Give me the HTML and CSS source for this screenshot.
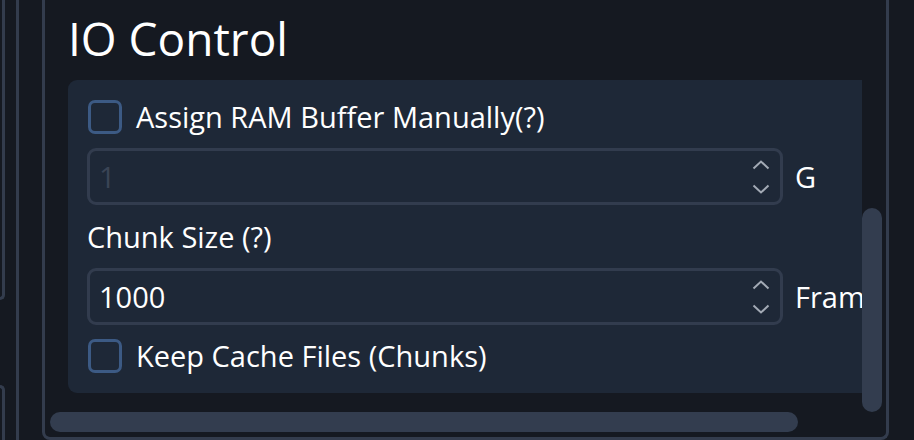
FILE: index.html
```html
<!DOCTYPE html>
<html>
<head>
<meta charset="utf-8">
<link rel="stylesheet" href="styles.css">
</head>
<body>
<div class="page">
  <div class="side">
    <div class="side-box side-top"></div>
    <div class="side-box side-bottom"></div>
  </div>
  <div class="outer">
    <div class="panel">
      <div class="scroll">
        <div class="viewport">
          <h1 class="title">IO Control</h1>
          <div class="card">
            <label class="check-row">
              <span class="checkbox"></span>
              <span class="check-text">Assign RAM Buffer Manually(?)</span>
            </label>
            <div class="field-row">
              <div class="spin disabled">
                <span class="spin-value">1</span>
                <span class="spin-arrows">
                  <svg width="18" height="36" viewBox="0 0 18 36"><path d="M1.5 9.5 L9 2.5 L16.5 9.5" fill="none" stroke="#a3aab5" stroke-width="2"/><path d="M1.5 26.5 L9 33.5 L16.5 26.5" fill="none" stroke="#a3aab5" stroke-width="2"/></svg>
                </span>
              </div>
              <span class="unit">G</span>
            </div>
            <div class="label">Chunk Size (?)</div>
            <div class="field-row">
              <div class="spin">
                <span class="spin-value">1000</span>
                <span class="spin-arrows">
                  <svg width="18" height="36" viewBox="0 0 18 36"><path d="M1.5 9.5 L9 2.5 L16.5 9.5" fill="none" stroke="#a3aab5" stroke-width="2"/><path d="M1.5 26.5 L9 33.5 L16.5 26.5" fill="none" stroke="#a3aab5" stroke-width="2"/></svg>
                </span>
              </div>
              <span class="unit">Frames</span>
            </div>
            <label class="check-row">
              <span class="checkbox"></span>
              <span class="check-text">Keep Cache Files (Chunks)</span>
            </label>
          </div>
        </div>
        <div class="vbar"><div class="vthumb"></div></div>
        <div class="hbar"><div class="hthumb"></div></div>
      </div>
    </div>
  </div>
</div>
</body>
</html>
```

FILE: styles.css
```css
* { box-sizing: border-box; }
html, body {
  margin: 0;
  padding: 0;
  background: #151921;
}
body {
  width: 914px;
  height: 440px;
  overflow: hidden;
  font-family: "Open Sans", "Noto Sans", sans-serif;
  color: #ffffff;
}
.page {
  display: flex;
  height: 440px;
}
.side {
  width: 5px;
  flex: none;
  display: flex;
  flex-direction: column;
}
.side-box {
  border-right: 3px solid #333c4d;
  border-bottom: 3px solid #333c4d;
  border-top: 3px solid #333c4d;
}
.side-top {
  height: 325px;
  border-top: none;
  border-bottom-right-radius: 7px;
}
.side-bottom {
  margin-top: 85px;
  height: 60px;
  border-bottom: none;
  border-top-right-radius: 7px;
}
.outer {
  margin-left: 11px;
  width: 902px;
  flex: none;
  border-left: 3px solid #333c4d;
  border-right: 3px solid #333c4d;
  padding-left: 23px;
}
.panel {
  width: 847px;
  height: 440px;
  border: 3px solid #333c4d;
  border-top: none;
  border-bottom-left-radius: 8px;
  border-bottom-right-radius: 8px;
  padding: 0 4px 5px 5px;
}
.scroll {
  display: grid;
  grid-template-columns: 812px 20px;
  grid-template-rows: 412px 20px;
  height: 432px;
}
.viewport {
  overflow: hidden;
  padding-left: 18px;
}
.title {
  margin: 0;
  font-weight: 400;
  font-size: 46px;
  line-height: 60px;
  height: 68px;
  padding-top: 8px;
  padding-left: 0;
  white-space: nowrap;
}
.card {
  margin-top: 12px;
  width: 940px;
  background: #1e2837;
  border-radius: 9px;
  padding: 20px 19px 20px 19px;
  display: flex;
  flex-direction: column;
  gap: 14px;
}
.check-row {
  display: flex;
  align-items: center;
  height: 34px;
  gap: 14px;
}
.checkbox {
  width: 34px;
  height: 34px;
  margin-left: 1px;
  border: 3px solid #3c5a84;
  border-radius: 7px;
  flex: none;
}
.check-text, .label, .unit, .spin-value {
  font-size: 29px;
  line-height: 34px;
  white-space: nowrap;
}
.label {
  height: 35px;
  padding-top: 1px;
}
.field-row {
  display: flex;
  align-items: center;
  gap: 12px;
}
.spin {
  width: 696px;
  height: 57px;
  border: 3px solid #323c4e;
  border-radius: 9px;
  display: flex;
  align-items: center;
  justify-content: space-between;
  padding: 0 10px 0 9px;
}
.spin.disabled .spin-value {
  color: #3a4455;
}
.spin-arrows {
  display: flex;
  margin-right: 0;
}
.spin-arrows svg { display: block; }
.vbar {
  display: flex;
  flex-direction: column;
  justify-content: flex-end;
}
.vthumb {
  height: 204px;
  background: #333d4f;
  border-radius: 10px;
}
.hbar {
  grid-column: 1;
}
.hthumb {
  width: 748px;
  height: 20px;
  background: #333d4f;
  border-radius: 10px;
}
```
